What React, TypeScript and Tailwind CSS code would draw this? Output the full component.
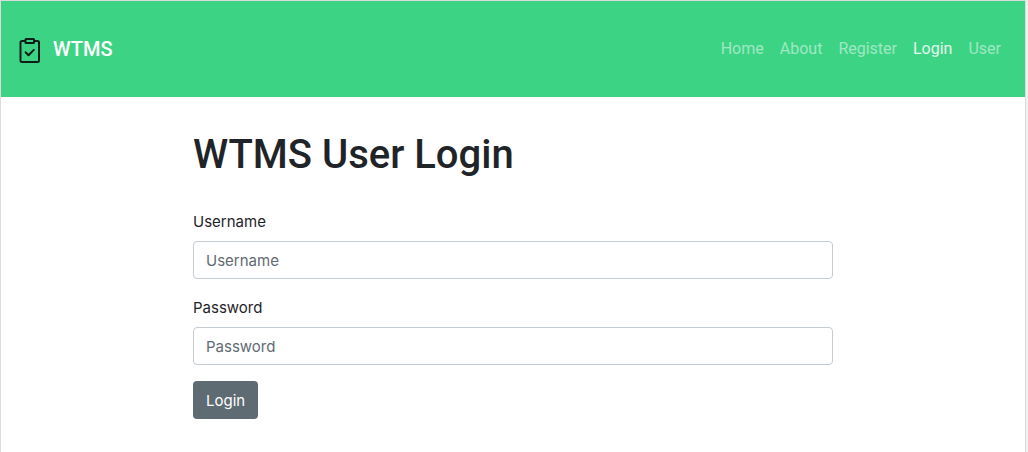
const links = ["Home", "About", "Register", "Login", "User"];

function ClipboardIcon() {
  return (
    <svg
      className="h-8 w-8 shrink-0"
      viewBox="0 0 32 32"
      fill="none"
      stroke="#0c1f16"
      strokeWidth="2"
      strokeLinecap="round"
      strokeLinejoin="round"
      aria-hidden="true"
    >
      <path d="M12 8H9a1.500 1.500 0 0 0-1.500 1.500v18A1.500 1.500 0 0 0 9 29h15.500a1.500 1.500 0 0 0 1.500-1.500v-18A1.500 1.500 0 0 0 24.500 8H21" />
      <rect x="12.500" y="6" width="8.500" height="4" rx="0.500" />
      <path d="M12.600 19.300l2.900 2.900 5.300-5.300" />
    </svg>
  );
}

function Field({ id, label, type }: { id: string; label: string; type: string }) {
  return (
    <div className="mb-4">
      <label htmlFor={id} className="mb-[7px] block pt-px">
        {label}
      </label>
      <input
        id={id}
        name={id}
        type={type}
        placeholder={label}
        className="block w-full rounded border border-[#c4ccd2] bg-white px-3 pt-[7px] pb-[5px] placeholder:text-[#5f6b72] placeholder:opacity-100"
      />
    </div>
  );
}

export default function App() {
  return (
    <div className="flex min-h-screen bg-[#f1f1f1] font-['Roboto',sans-serif] text-base text-[#1f2428]">
      <div className="mr-0.5 flex-1 border border-b-0 border-[#dcdcdc] bg-white">
        <nav className="flex h-24 items-center justify-between bg-[#3dd385] pr-6 pl-3">
          <a href="#" className="flex items-center gap-2 text-xl font-medium text-white">
            <ClipboardIcon />
            WTMS
          </a>
          <ul className="flex gap-4">
            {links.map((name) => (
              <li key={name}>
                <a
                  href="#"
                  aria-current={name === "Login" ? "page" : undefined}
                  className={name === "Login" ? "text-white/85" : "text-white/50"}
                >
                  {name}
                </a>
              </li>
            ))}
          </ul>
        </nav>
        <main className="mx-auto w-5/8 pt-[34px] font-['Inter',sans-serif] text-[15px] leading-6">
          <h1 className="mb-[30px] font-['Roboto',sans-serif] text-[40px] leading-12 font-medium">
            WTMS User Login
          </h1>
          <form onSubmit={(event) => event.preventDefault()}>
            <Field id="username" label="Username" type="text" />
            <Field id="password" label="Password" type="password" />
            <button
              type="submit"
              className="rounded bg-[#5f6b72] px-[13px] pt-2 pb-1.5 text-white"
            >
              Login
            </button>
          </form>
        </main>
      </div>
    </div>
  );
}
